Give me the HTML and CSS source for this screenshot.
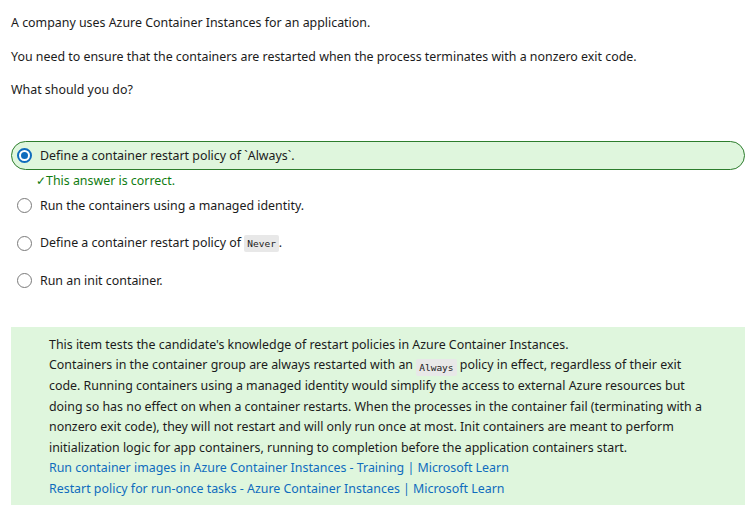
FILE: index.html
```html
<!DOCTYPE html>
<html>
<head>
<meta charset="utf-8">
<link rel="stylesheet" href="styles.css">
</head>
<body>
<div class="page">
  <p class="q">A company uses Azure Container Instances for an application.</p>
  <p class="q">You need to ensure that the containers are restarted when the process terminates with a nonzero exit code.</p>
  <p class="q">What should you do?</p>

  <div class="options">
    <div class="option selected">
      <span class="radio checked"></span>
      <span class="label">Define a container restart policy of `Always`.</span>
    </div>
    <div class="feedback">&#10003;This answer is correct.</div>
    <div class="option">
      <span class="radio"></span>
      <span class="label">Run the containers using a managed identity.</span>
    </div>
    <div class="option">
      <span class="radio"></span>
      <span class="label">Define a container restart policy of <code>Never</code>.</span>
    </div>
    <div class="option">
      <span class="radio"></span>
      <span class="label">Run an init container.</span>
    </div>
  </div>

  <div class="explain">
    <p>This item tests the candidate's knowledge of restart policies in Azure Container Instances.</p>
    <p>Containers in the container group are always restarted with an <code>Always</code> policy in effect, regardless of their exit code. Running containers using a managed identity would simplify the access to external Azure resources but doing so has no effect on when a container restarts. When the processes in the container fail (terminating with a nonzero exit code), they will not restart and will only run once at most. Init containers are meant to perform initialization logic for app containers, running to completion before the application containers start.</p>
    <p><a href="#">Run container images in Azure Container Instances - Training | Microsoft Learn</a></p>
    <p><a href="#">Restart policy for run-once tasks - Azure Container Instances | Microsoft Learn</a></p>
  </div>
</div>
</body>
</html>
```
FILE: styles.css
```css
html, body {
  margin: 0;
  padding: 0;
  background: #ffffff;
}
body {
  font-family: "Noto Sans", "Open Sans", sans-serif;
  font-size: 12.4px;
  color: #1b1b1b;
}
.page {
  padding: 13px 10px 0 11px;
}
.q {
  margin: 0 0 13.5px 0;
  line-height: 20px;
}
.options {
  margin-top: 41px;
  display: flex;
  flex-direction: column;
}
.option {
  display: flex;
  align-items: center;
  gap: 8px;
  height: 29px;
  padding-left: 5px;
  margin-bottom: 8.5px;
  box-sizing: border-box;
  border: 1px solid transparent;
  border-radius: 15px;
}
.option.selected {
  background: #dff6dd;
  border-color: #2d7d2d;
  margin-bottom: 0;
}
.radio {
  width: 15px;
  height: 15px;
  box-sizing: border-box;
  border: 1px solid #7a7a7a;
  border-radius: 50%;
  background: #fff;
  flex: none;
  display: flex;
  align-items: center;
  justify-content: center;
}
.radio.checked {
  border: 2px solid #0f6cbd;
}
.radio.checked::after {
  content: "";
  width: 7px;
  height: 7px;
  border-radius: 50%;
  background: #0f6cbd;
}
.feedback {
  color: #107c10;
  padding-left: 25px;
  line-height: 20px;
  margin: 1px 0 0 0;
}
code {
  display: inline-block;
  font-family: "DejaVu Sans Mono", "Liberation Mono", monospace;
  font-size: 9.5px;
  line-height: 15px;
  background: #e8e8e8;
  padding: 1px 3px;
  border-radius: 2px;
}
.explain code {
  vertical-align: -2px;
}
.explain {
  margin-top: 23px;
  background: #dff6dd;
  padding: 8px 35px 6px 38px;
  line-height: 20.5px;
}
.explain p {
  margin: 0;
}
.explain a {
  color: #0f6cbd;
  text-decoration: none;
}
```
